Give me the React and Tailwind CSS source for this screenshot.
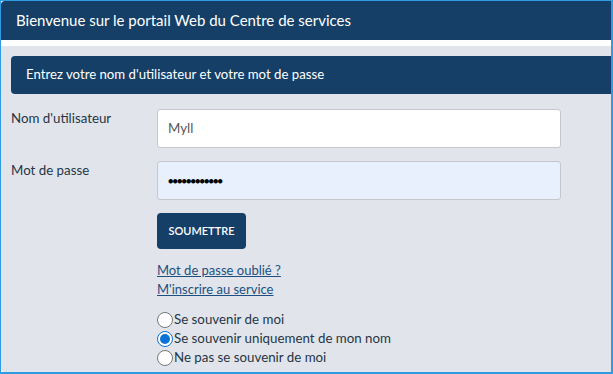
import React from "react";

const font = { fontFamily: "Lato, 'Noto Sans', sans-serif" };

function Radio({ checked, label }) {
  return (
    <label className="flex items-center h-[19px] text-[13.3px] text-[#253545]">
      <span
        className={
          "w-[16px] h-[16px] rounded-full border bg-white flex items-center justify-center mr-[1px] " +
          (checked ? "border-[#0b72d6] border-[1px]" : "border-[#767676]")
        }
      >
        {checked && <span className="w-[10px] h-[10px] rounded-full bg-[#0b72d6]" />}
      </span>
      <span>{label}</span>
    </label>
  );
}

export default function App() {
  return (
    <div
      className="w-[613px] h-[374px] overflow-hidden border-l border-t border-r-2 border-b-2 border-[#2f9be0] bg-white flex flex-col"
      style={font}
    >
      <div className="h-[39px] bg-[#153f67] rounded-tl-[4px] flex items-center pl-[15px] text-white text-[15px] shrink-0">
        Bienvenue sur le portail Web du Centre de services
      </div>
      <div className="h-[6px] bg-white shrink-0" />
      <div className="flex-1 bg-[#e1e5eb] pt-[10px] pl-[10px] rounded-bl-[4px]">
        <div className="h-[38px] bg-[#153f67] rounded-l-[4px] flex items-center pl-[15px] text-white text-[13.2px]">
          Entrez votre nom d'utilisateur et votre mot de passe
        </div>
        <div className="flex mt-[15px]">
          <div className="w-[146px] text-[13.3px] leading-[18px] text-[#253545]">Nom d'utilisateur</div>
          <div className="w-[404px] h-[39px] bg-white border border-[#c4c7cc] rounded-[3px] flex items-center pl-[10px] text-[13.3px] text-[#555]">
            Myll
          </div>
        </div>
        <div className="flex mt-[13px]">
          <div className="w-[146px] text-[13.3px] leading-[18px] text-[#253545]">Mot de passe</div>
          <div className="w-[404px] h-[39px] bg-[#e8f0fe] border border-[#c4c7cc] rounded-[3px] flex items-center pl-[10px] text-[9px] text-black tracking-[-0.9px]">
            ●●●●●●●●●●●●
          </div>
        </div>
        <div className="pl-[146px]">
          <div className="mt-[13px] w-[89px] h-[36px] bg-[#153f67] rounded-[4px] flex items-center justify-center text-white text-[11px] font-semibold">
            SOUMETTRE
          </div>
          <div className="mt-[12px] flex flex-col text-[13px] text-[#1d4f80] leading-[19px]">
            <span className="underline">Mot de passe oublié ?</span>
            <span className="underline">M'inscrire au service</span>
          </div>
          <div className="mt-[11px] flex flex-col">
            <Radio label="Se souvenir de moi" />
            <Radio checked label="Se souvenir uniquement de mon nom" />
            <Radio label="Ne pas se souvenir de moi" />
          </div>
        </div>
      </div>
    </div>
  );
}
